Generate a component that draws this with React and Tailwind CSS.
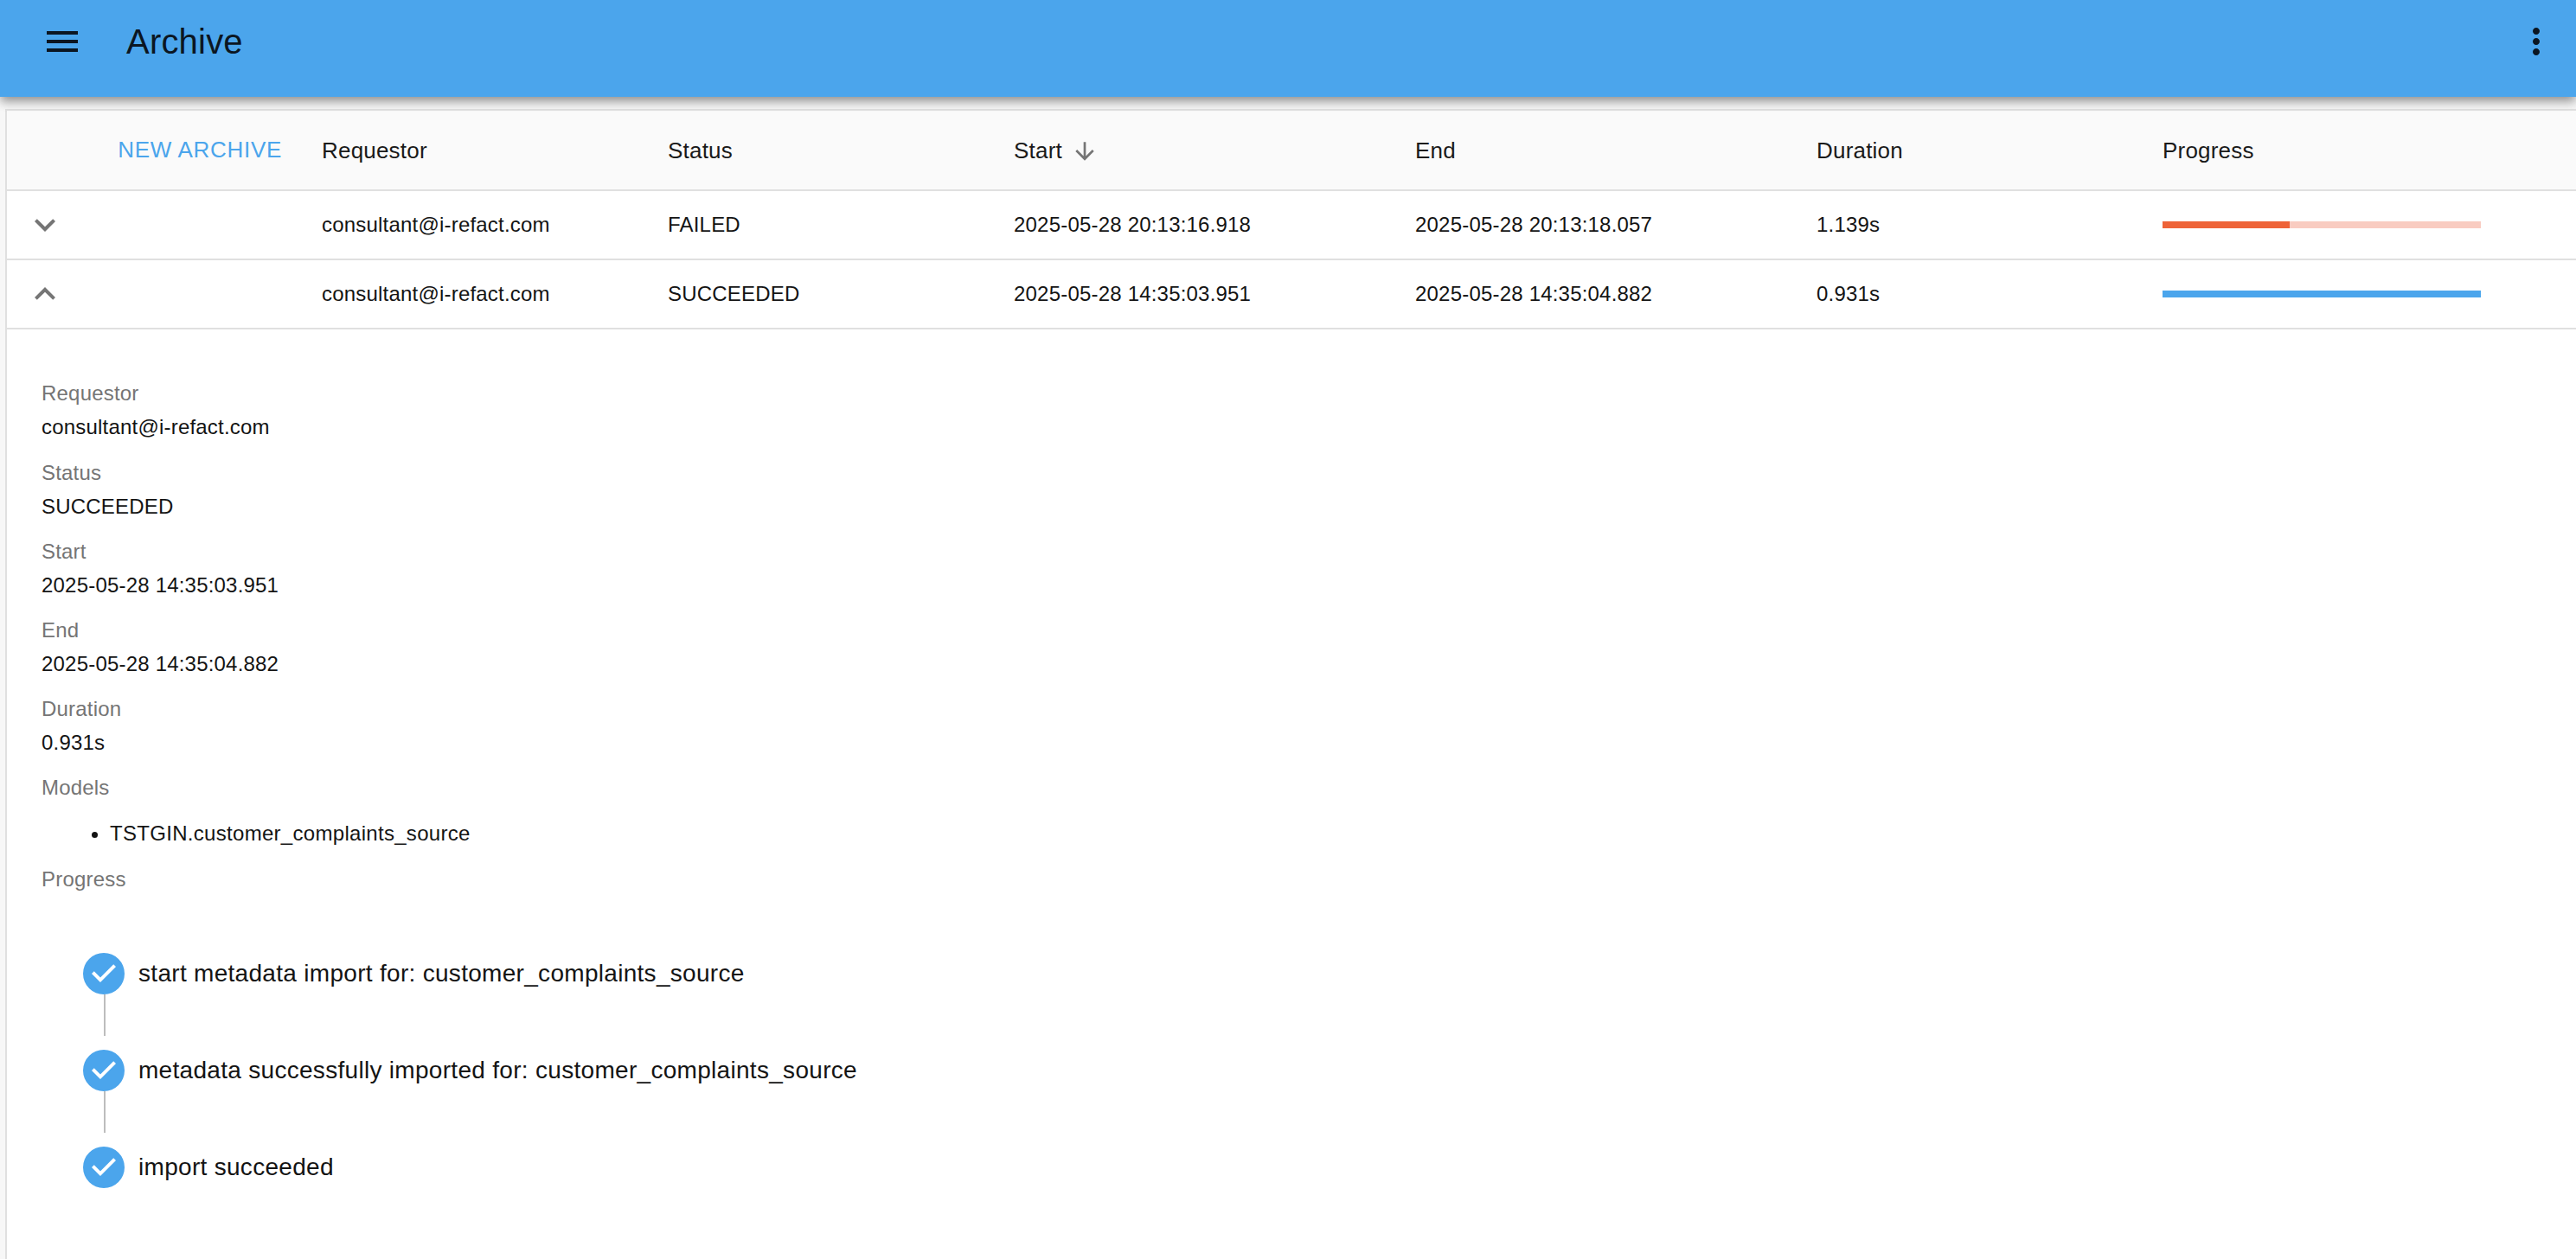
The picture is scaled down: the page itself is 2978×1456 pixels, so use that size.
import React from "react";

const rows = [
  {
    requestor: "consultant@i-refact.com",
    status: "FAILED",
    start: "2025-05-28 20:13:16.918",
    end: "2025-05-28 20:13:18.057",
    duration: "1.139s",
    progress: 40,
    open: false,
  },
  {
    requestor: "consultant@i-refact.com",
    status: "SUCCEEDED",
    start: "2025-05-28 14:35:03.951",
    end: "2025-05-28 14:35:04.882",
    duration: "0.931s",
    progress: 100,
    open: true,
  },
];

const details = [
  ["Requestor", "consultant@i-refact.com"],
  ["Status", "SUCCEEDED"],
  ["Start", "2025-05-28 14:35:03.951"],
  ["End", "2025-05-28 14:35:04.882"],
  ["Duration", "0.931s"],
];

const steps = [
  "start metadata import for: customer_complaints_source",
  "metadata successfully imported for: customer_complaints_source",
  "import succeeded",
];

const Icon = ({ d, className }) => (
  <svg viewBox="0 0 24 24" className={className} fill="currentColor">
    <path d={d} />
  </svg>
);

const gridCols = "grid grid-cols-[364px_400px_400px_464px_464px_400px_1fr] items-center";

const Row = ({ row }) => (
  <div className={`${gridCols} h-[80px] border-b-2 border-[#e0e0e0] text-[24px] tracking-[0.2px] text-[#141414]`}>
    <div className="pl-[20px]">
      <Icon
        className="w-[48px] h-[48px] text-[#757575]"
        d={row.open ? "M7.41 15.41L12 10.83l4.59 4.58L18 14l-6-6-6 6z" : "M7.41 8.59L12 13.17l4.59-4.58L18 10l-6 6-6-6 1.41-1.41z"}
      />
    </div>
    <div>{row.requestor}</div>
    <div>{row.status}</div>
    <div>{row.start}</div>
    <div>{row.end}</div>
    <div>{row.duration}</div>
    <div>
      {row.status === "FAILED" ? (
        <div className="w-[368px] h-[8px] bg-[#f9ccc1]">
          <div className="h-full bg-[#ee6338]" style={{ width: `${row.progress}%` }} />
        </div>
      ) : (
        <div className="w-[368px] h-[8px] bg-[#4ba5ec]" />
      )}
    </div>
  </div>
);

const Detail = () => (
  <div className="pl-[40px] pt-[59px]">
    {details.map(([label, value]) => (
      <div key={label} className="h-[91px] first:h-[92px] last:h-[90px]">
        <div className="text-[24px] leading-[30px] tracking-[0.2px] text-[#757575]">{label}</div>
        <div className="mt-[9px] text-[24px] leading-[30px] tracking-[0.2px] text-[#141414]">{value}</div>
      </div>
    ))}
    <div className="text-[24px] leading-[30px] tracking-[0.2px] text-[#757575]">Models</div>
    <ul className="list-disc pl-[79px] mt-[23px] text-[24px] leading-[30px] tracking-[0.3px] text-[#141414]">
      <li>TSTGIN.customer_complaints_source</li>
    </ul>
    <div className="mt-[23px] text-[24px] leading-[30px] tracking-[0.2px] text-[#757575]">Progress</div>
    <div className="mt-[70px] pl-[48px]">
      {steps.map((step, i) => (
        <div key={step}>
          <div className="flex items-center gap-[16px] h-[48px]">
            <Icon
              className="w-[48px] h-[48px] text-[#4ba5ec]"
              d="M12 0a12 12 0 1 0 0 24 12 12 0 0 0 0-24zm-2 17l-5-5 1.4-1.4 3.6 3.6 7.6-7.6L19 8l-9 9z"
            />
            <span className="text-[28px] tracking-[0.3px] text-[#141414]">{step}</span>
          </div>
          {i < steps.length - 1 && <div className="ml-[24px] w-[2px] h-[48px] mb-[16px] bg-[#bdbdbd]" />}
        </div>
      ))}
    </div>
  </div>
);

const App = () => {
  return (
    <div className="h-screen overflow-hidden bg-[#f7f7f7] font-['Liberation_Sans',Arial,sans-serif]">
      <header className="relative z-10 h-[112px] bg-[#4ba5ec] text-[#0b1622] shadow-[0_4px_12px_-1px_rgba(0,0,0,0.4),0_8px_10px_rgba(0,0,0,0.1)]">
        <div className="flex items-center h-[96px] pl-[48px] pr-[22px]">
          <Icon className="w-[48px] h-[48px]" d="M3 18h18v-2H3v2zm0-5h18v-2H3v2zm0-7v2h18V6H3z" />
          <h1 className="ml-[50px] text-[40px] tracking-[0.2px] font-normal">Archive</h1>
          <Icon
            className="ml-auto w-[48px] h-[48px]"
            d="M12 8c1.1 0 2-.9 2-2s-.9-2-2-2-2 .9-2 2 .9 2 2 2zm0 2c-1.1 0-2 .9-2 2s.9 2 2 2 2-.9 2-2-.9-2-2-2zm0 6c-1.1 0-2 .9-2 2s.9 2 2 2 2-.9 2-2-.9-2-2-2z"
          />
        </div>
      </header>
      <main className="pt-[14px] pl-[6px]">
        <div className="bg-white border-t-2 border-l-2 border-[#e0e0e0] h-[1400px]">
          <div className={`${gridCols} h-[93px] pt-[2px] bg-[#fafafa] border-b-2 border-[#e0e0e0] text-[26px] tracking-[0.2px] text-[#1a1a1a]`}>
            <div className="flex justify-end pr-[46px]">
              <button className="text-[26px] tracking-[0.7px] text-[#4ba5ec] -translate-y-[1px]">NEW ARCHIVE</button>
            </div>
            <div>Requestor</div>
            <div>Status</div>
            <div className="flex items-center gap-[10px]">
              Start
              <Icon
                className="w-[32px] h-[32px] text-[#757575]"
                d="M20 12l-1.41-1.41L13 16.17V4h-2v12.17l-5.58-5.59L4 12l8 8 8-8z"
              />
            </div>
            <div>End</div>
            <div>Duration</div>
            <div>Progress</div>
          </div>
          {rows.map((row) => (
            <Row key={row.start} row={row} />
          ))}
          <Detail />
        </div>
      </main>
    </div>
  );
};

export default App;
